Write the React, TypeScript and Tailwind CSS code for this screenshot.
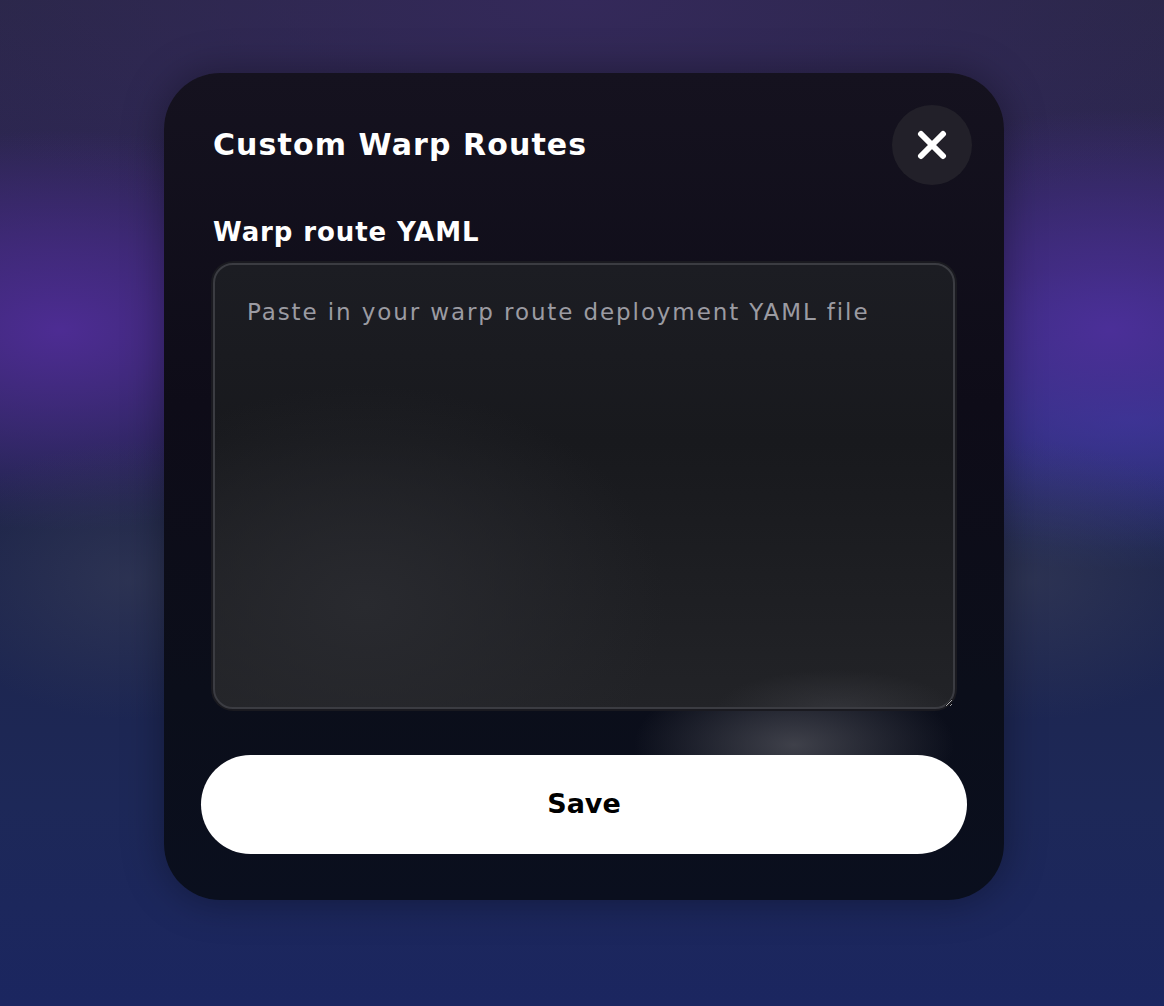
import React from "react";

const font = { fontFamily: "'DejaVu Sans', Inter, sans-serif" };

export default function App() {
  return (
    <div className="relative w-[1164px] h-[1006px] overflow-hidden bg-[#1b2350]" style={font}>
      <div className="absolute inset-0 bg-[radial-gradient(ellipse_360px_200px_at_60px_330px,#4d2c93_0%,rgba(77,44,147,0)_100%),radial-gradient(ellipse_360px_220px_at_1110px_330px,#4b2f98_0%,rgba(75,47,152,0)_100%),radial-gradient(ellipse_420px_150px_at_1130px_420px,#2a3a8e_0%,rgba(42,58,142,0)_100%),radial-gradient(ellipse_700px_260px_at_580px_0px,#34295a_0%,rgba(52,41,90,0)_100%),linear-gradient(180deg,#2a2748_0%,#2e2657_25%,#1d2448_50%,#1d2858_80%,#1b2660_100%)]" />
      <div className="absolute inset-0 bg-[radial-gradient(ellipse_200px_140px_at_130px_580px,rgba(60,65,90,0.5)_0%,rgba(60,65,90,0)_100%),radial-gradient(ellipse_200px_140px_at_1030px_580px,rgba(60,65,90,0.5)_0%,rgba(60,65,90,0)_100%)]" />

      <div className="relative flex justify-center pt-[73px] pl-[4px]">
        <div className="relative w-[840px] h-[827px] rounded-[56px] overflow-hidden bg-[linear-gradient(180deg,#15121f_0%,#0e0c18_40%,#0b0e1a_75%,#0a0f1e_100%)] shadow-[0_0_40px_rgba(0,0,0,0.35)]">
          <div className="absolute inset-0 bg-[radial-gradient(ellipse_160px_75px_at_630px_672px,rgba(85,86,94,0.7)_0%,rgba(85,86,94,0)_100%)]" />
          <div className="relative flex flex-col pl-[37px] pr-[32px] pt-[32px]">
            <div className="flex items-center justify-between pl-[12px]">
              <h1 className="text-[30px] font-bold text-white leading-[40px] tracking-[1.1px]">
                Custom Warp Routes
              </h1>
              <button className="w-[80px] h-[80px] rounded-full bg-[#222029] flex items-center justify-center">
                <svg width="30" height="30" viewBox="0 0 30 30" fill="none">
                  <path d="M4 4L26 26M26 4L4 26" stroke="white" strokeWidth="6" strokeLinecap="round" />
                </svg>
              </button>
            </div>
            <label className="pl-[12px] mt-[30px] text-[26px] font-bold text-white leading-[34px] tracking-[0.9px]">
              Warp route YAML
            </label>
            <div className="ml-[10px] mr-[15px] mt-[12px] rounded-[22px] p-[2px] bg-[#1a1a20]">
              <textarea
                placeholder="Paste in your warp route deployment YAML file"
                className="block w-full h-[446px] rounded-[20px] border-2 border-[#3b3c42] bg-[radial-gradient(ellipse_120px_40px_at_620px_445px,rgba(70,71,78,0.45)_0%,rgba(70,71,78,0)_100%),radial-gradient(ellipse_300px_220px_at_150px_340px,#292a2f_0%,rgba(41,42,47,0)_100%),linear-gradient(180deg,#1c1d23_0%,#18191d_40%,#222327_100%)] px-[32px] pt-[32px] text-[23px] leading-[30px] tracking-[1.9px] text-white placeholder:text-[#9b9ba2] outline-none resize-y"
                style={font}
              />
            </div>
            <button className="mt-[44px] mr-[5px] h-[99px] w-[766px] rounded-full bg-white text-black text-[27px] font-bold">
              Save
            </button>
          </div>
        </div>
      </div>
    </div>
  );
}
